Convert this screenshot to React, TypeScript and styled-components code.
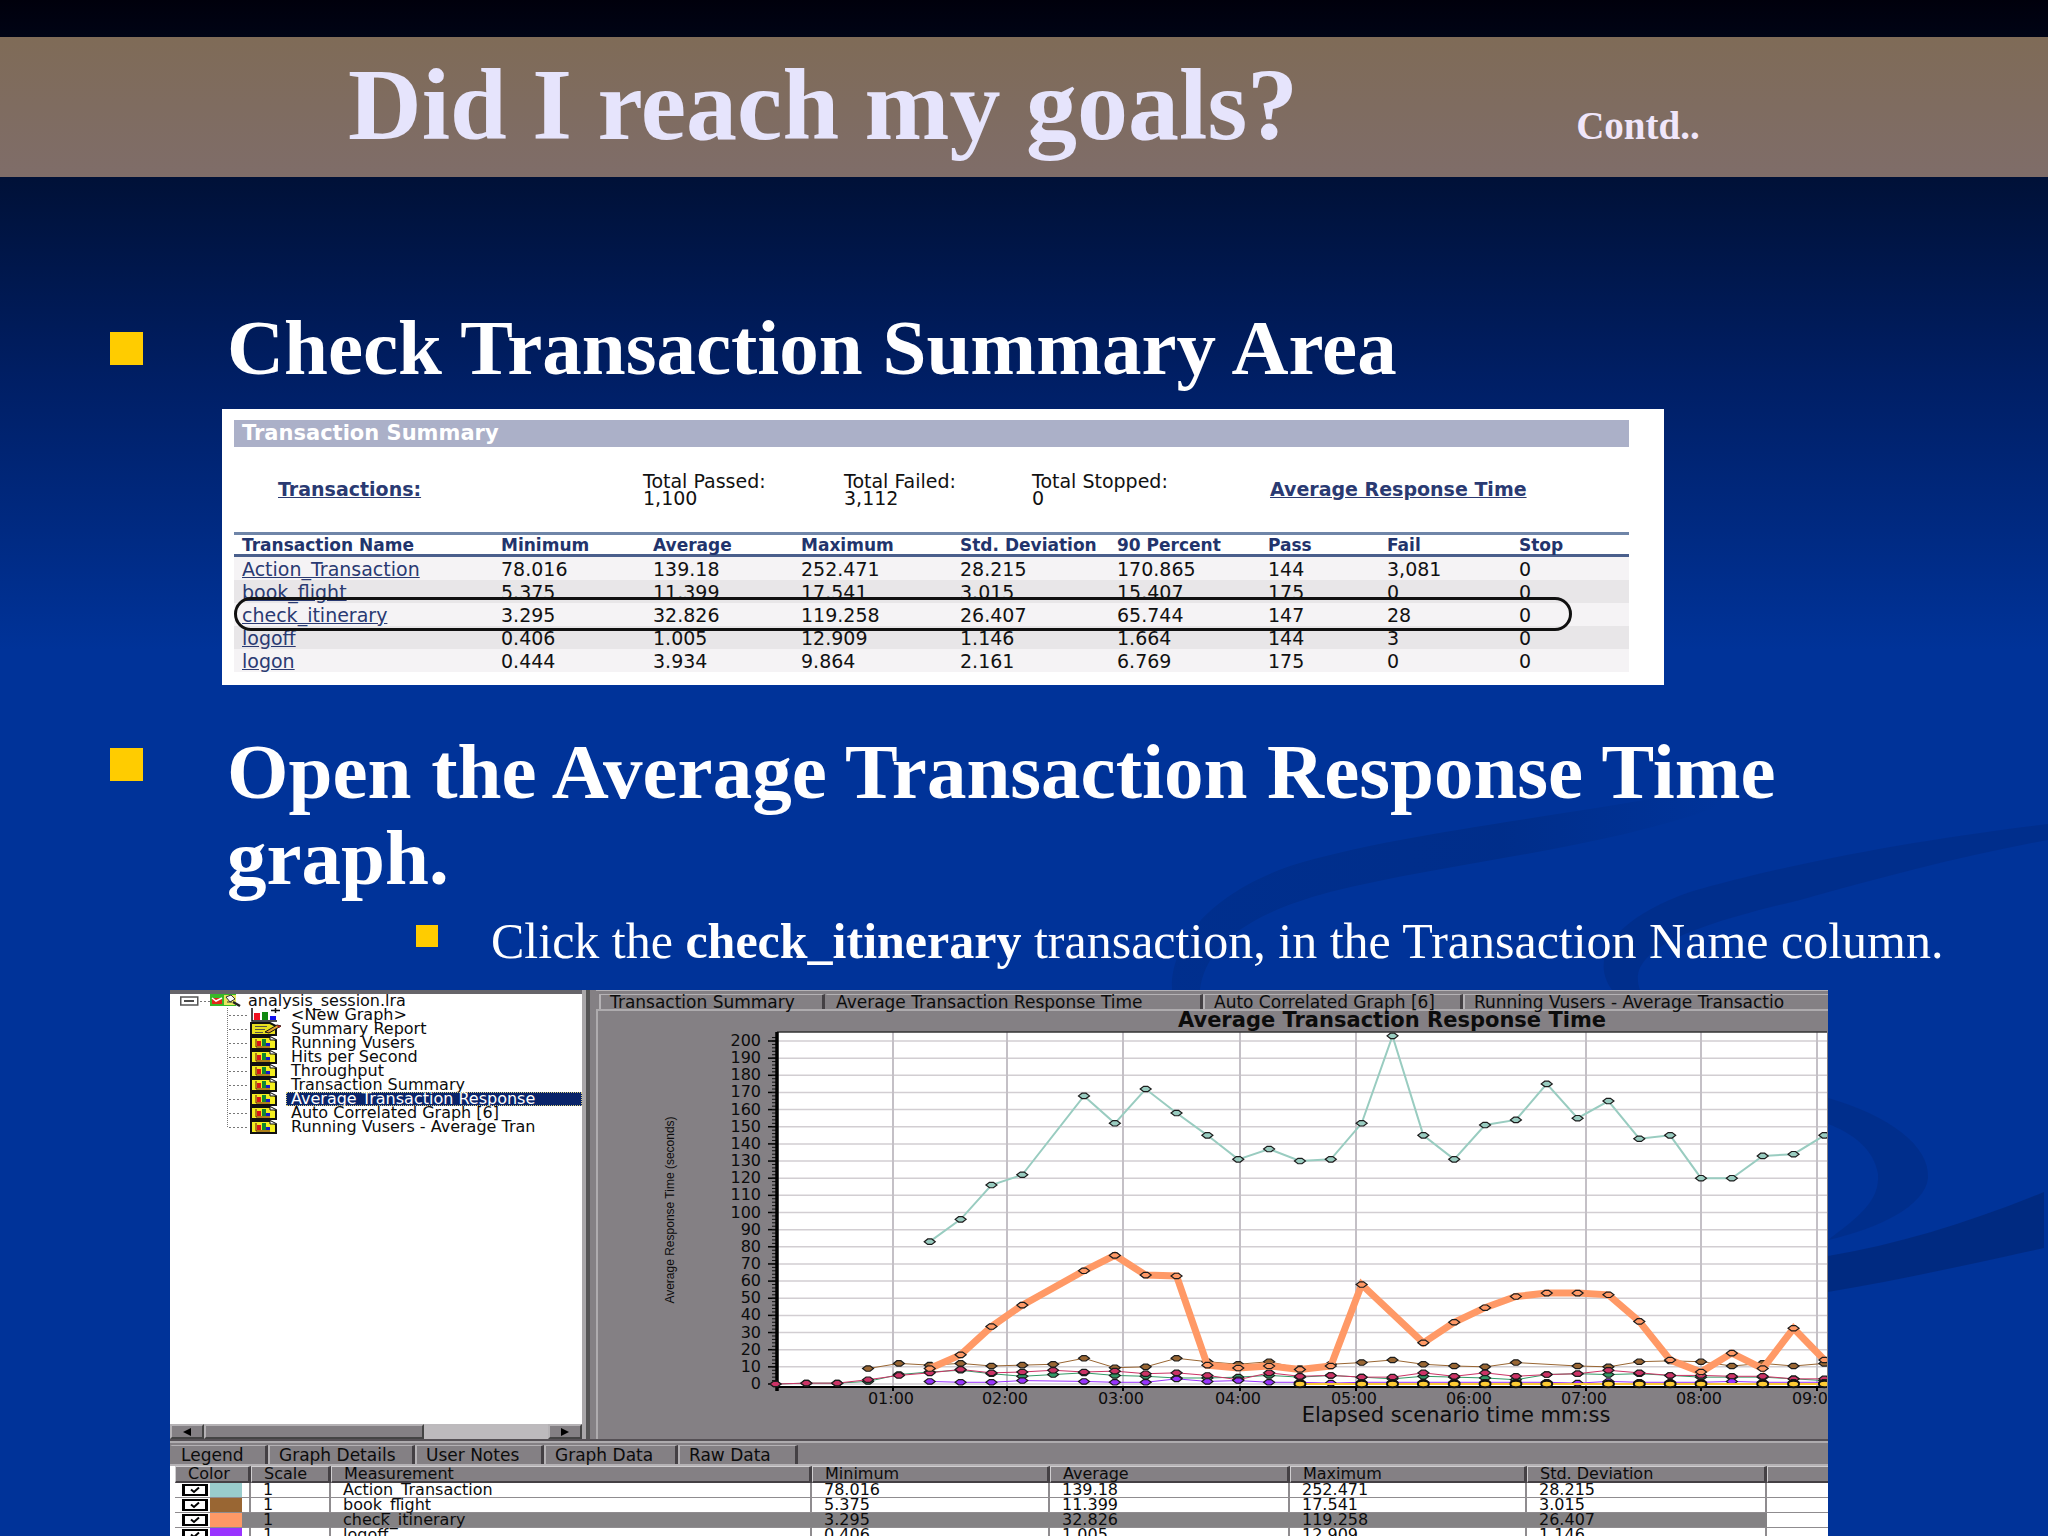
import React from "react";
import styled, { createGlobalStyle, css } from "styled-components";

const GlobalStyle = createGlobalStyle`
  * { box-sizing: border-box; }
  body { margin: 0; background: #003399; }
`;

const serif = `"Liberation Serif", "Times New Roman", serif`;
const wide = `"DejaVu Sans", Verdana, sans-serif`;

/* ---------- slide ---------- */

const Slide = styled.main`
  position: relative;
  isolation: isolate;
  display: flex;
  flex-direction: column;
  height: 100vh;
  overflow: hidden;
  padding-top: 37px;
  font-family: ${serif};
  color: #fff;
  background: linear-gradient(#00000c 0, #001138 180px, #001f66 384px, #003399 650px);
`;

const Backdrop = styled.svg`
  position: absolute;
  inset: 0;
  z-index: -1;
  width: 100%;
  height: 100%;
`;

const Band = styled.header`
  display: flex;
  align-items: baseline;
  gap: 278px;
  height: 140px;
  padding: 12px 0 0 348px;
  background: linear-gradient(#7f6b57, #7f6d69);
`;

const Title = styled.h1`
  margin: 0;
  font-size: 102px;
  line-height: 112px;
  color: #e6e4fc;
`;

const Contd = styled.span`
  font-size: 39px;
  font-weight: bold;
  color: #f0e6fa;
`;

const Section = styled.section<{ $top: number }>`
  display: grid;
  grid-template-columns: 117px 1fr;
  padding: 0 80px 0 110px;
  margin-top: ${(p) => p.$top}px;
`;

const Bullet = styled.span<{ $size: number; $top: number }>`
  width: ${(p) => p.$size}px;
  height: ${(p) => p.$size}px;
  margin-top: ${(p) => p.$top}px;
  background: #ffcc00;
`;

const Heading = styled.h2`
  margin: 0;
  font-size: 79px;
  line-height: 86px;
`;

const SubPoint = styled.div`
  display: grid;
  grid-template-columns: 75px 1fr;
  margin: 12px 0 0 416px;
`;

const SubText = styled.p`
  margin: 0;
  font-size: 50px;
  line-height: 56px;
  white-space: nowrap;
`;

/* ---------- transaction summary ---------- */

const Summary = styled.section`
  max-width: 1442px;
  margin: 18px 0 0 222px;
  padding: 11px 35px 13px 12px;
  background: #fff;
  color: #111;
  font-family: ${wide};
  font-size: 19px;
`;

const SummaryTitle = styled.h3`
  margin: 0;
  padding-left: 8px;
  font-size: 21px;
  line-height: 27px;
  color: #fff;
  background: #abb0c8;
`;

const Totals = styled.div`
  display: grid;
  grid-template-columns: 365px 201px 188px 238px 1fr;
  align-items: center;
  height: 85px;
  padding-left: 44px;
  line-height: 17px;
`;

const Link = styled.a<{ $bold?: boolean }>`
  color: #2a3a72;
  font-weight: ${(p) => (p.$bold ? "bold" : "normal")};
`;

const TableWrap = styled.div`
  position: relative;
`;

const SummaryTable = styled.table`
  width: 100%;
  table-layout: fixed;
  border-spacing: 0;
  th, td {
    padding: 0 0 0 8px;
    text-align: left;
    white-space: nowrap;
  }
  th {
    height: 25px;
    font-size: 17px;
    line-height: 18px;
    color: #22346c;
    border-top: 3px solid #6f85a8;
    border-bottom: 3px solid #4a5f8c;
  }
  td {
    height: 23px;
    line-height: 22px;
    background: #f5f3f5;
  }
  tbody tr:nth-child(even) td { background: #e8e6e8; }
`;

const Highlight = styled.div`
  position: absolute;
  top: 65px;
  left: 0;
  right: 57px;
  height: 34px;
  border: 3px solid #111;
  border-radius: 17px;
`;

/* ---------- analysis window ---------- */

const Analysis = styled.section`
  flex: 1;
  min-height: 0;
  display: flex;
  flex-direction: column;
  margin: 21px 220px 0 170px;
  overflow: hidden;
  background: #848084;
  color: #0c0c0c;
  font-family: ${wide};
  font-size: 16px;
`;

const Upper = styled.div`
  display: grid;
  grid-template-columns: 412px 1fr;
  column-gap: 14px;
  height: 451px;
  flex: none;
  border-bottom: 2px solid #555055;
`;

const TreePane = styled.div`
  display: flex;
  flex-direction: column;
  border-top: 4px solid #67656a;
  background: #fff;
  box-shadow: 4px 0 0 #a9a7a9, 8px 0 0 #555;
  overflow: hidden;
`;

const TreeClip = styled.div`
  flex: 1;
  overflow: hidden;
`;

const TreeRow = styled.div<{ $root?: boolean }>`
  display: flex;
  height: 14px;
  line-height: 14px;
  white-space: nowrap;
  padding-left: ${(p) => (p.$root ? 10 : 57)}px;
`;

const TreeLabel = styled.span<{ $selected?: boolean }>`
  flex: 1;
  padding-left: 5px;
  ${(p) =>
    p.$selected &&
    css`
      color: #fff;
      background: #0a246a;
      outline: 1px dotted #d8d080;
      outline-offset: -1px;
    `}
`;

const Scrollbar = styled.div`
  display: flex;
  height: 15px;
  background: #bdbabd;
`;

const raised = css`
  background: #848084;
  border: 2px solid;
  border-color: #b5b2b5 #444 #444 #b5b2b5;
`;

const ArrowButton = styled.button`
  ${raised}
  display: grid;
  place-items: center;
  width: 34px;
  padding: 0;
`;

const Thumb = styled.div`
  ${raised}
  width: 220px;
  margin-right: auto;
`;

const GraphPane = styled.div`
  min-width: 0;
  padding-top: 3px;
  border-top: 1px solid #b5b2b5;
  overflow: hidden;
`;

const Tabs = styled.div<{ $graph?: boolean }>`
  display: flex;
  height: ${(p) => (p.$graph ? 15 : 19)}px;
  padding-left: ${(p) => (p.$graph ? 3 : 0)}px;
  white-space: nowrap;
`;

const Tab = styled.button<{ $width: number; $active?: boolean }>`
  flex: none;
  width: ${(p) => p.$width}px;
  padding: 0 0 0 9px;
  border: 0 solid #444044;
  border-right-width: 3px;
  border-left: 2px solid #b5b2b5;
  border-top: 1px solid #b5b2b5;
  background: #848084;
  color: inherit;
  font: inherit;
  font-size: 17px;
  line-height: 13px;
  text-align: left;
  white-space: nowrap;
  ${(p) => p.$active && css`border-left-color: #848084;`}
`;

const ChartFrame = styled.div`
  border-top: 2px solid #aeabae;
  border-left: 2px solid #aeabae;
  overflow: hidden;
  svg { display: block; }
`;

const Lower = styled.div`
  padding-top: 2px;
  border-top: 2px solid #aeabae;
`;

const LegendWrap = styled.div`
  padding-left: 5px;
  border-top: 2px solid #b5b2b5;
  background: #fff;
`;

const LegendTable = styled.table`
  width: 100%;
  table-layout: fixed;
  border-spacing: 0;
  th, td {
    height: 15px;
    padding: 0 0 0 12px;
    font-weight: normal;
    line-height: 14px;
    text-align: left;
    white-space: nowrap;
  }
  th {
    height: 17px;
    background: #848084;
    border: 2px solid;
    border-width: 1px 3px 2px 1px;
    border-color: #d0ced0 #444044 #444044 #d0ced0;
    line-height: 14px;
  }
  td {
    border-right: 2px solid #8f8c8f;
    border-bottom: 1px solid #8f8c8f;
  }
  th:last-child, td:last-child { border-right: 0; }
`;

const LegendRow = styled.tr<{ $selected?: boolean }>`
  ${(p) =>
    p.$selected &&
    css`
      td:not(:last-child) {
        background: #848284;
        border-right-color: #848284;
      }
      td:first-child { background: linear-gradient(90deg, #fff 50px, #848284 50px); }
    `}
`;

const Mark = styled.label`
  position: relative;
  display: flex;
  gap: 2px;
  height: 14px;
  margin-left: -5px;
  svg {
    position: absolute;
    left: 6px;
    top: 3px;
    pointer-events: none;
  }
`;

const Check = styled.input`
  appearance: none;
  width: 26px;
  height: 12px;
  margin: 1px 0 0;
  border: 2px solid #000;
  border-width: 2px 3px;
  background: #fff;
`;

const Swatch = styled.span<{ $color: string }>`
  width: 32px;
  height: 14px;
  background: ${(p) => p.$color};
`;

/* ---------- data ---------- */

const summaryCols = [259, 152, 148, 159, 157, 151, 119, 132, 118];
const summaryHead = ["Transaction Name", "Minimum", "Average", "Maximum", "Std. Deviation", "90 Percent", "Pass", "Fail", "Stop"];
const summaryRows = [
  ["Action_Transaction", "78.016", "139.18", "252.471", "28.215", "170.865", "144", "3,081", "0"],
  ["book_flight", "5.375", "11.399", "17.541", "3.015", "15.407", "175", "0", "0"],
  ["check_itinerary", "3.295", "32.826", "119.258", "26.407", "65.744", "147", "28", "0"],
  ["logoff", "0.406", "1.005", "12.909", "1.146", "1.664", "144", "3", "0"],
  ["logon", "0.444", "3.934", "9.864", "2.161", "6.769", "175", "0", "0"],
];

const legendCols = [76, 80, 481, 238, 240, 237, 240];
const legendHead = ["Color", "Scale", "Measurement", "Minimum", "Average", "Maximum", "Std. Deviation"];
const legendRows = [
  { color: "#99cccc", cells: ["1", "Action_Transaction", "78.016", "139.18", "252.471", "28.215"] },
  { color: "#996633", cells: ["1", "book_flight", "5.375", "11.399", "17.541", "3.015"] },
  { color: "#ff9966", cells: ["1", "check_itinerary", "3.295", "32.826", "119.258", "26.407"], selected: true },
  { color: "#9933ff", cells: ["1", "logoff", "0.406", "1.005", "12.909", "1.146"] },
];

const treeItems = [
  { label: "<New Graph>", icon: "new" },
  { label: "Summary Report", icon: "report" },
  { label: "Running Vusers", icon: "graph" },
  { label: "Hits per Second", icon: "graph" },
  { label: "Throughput", icon: "graph" },
  { label: "Transaction Summary", icon: "graph" },
  { label: "Average Transaction Response", icon: "graph", selected: true },
  { label: "Auto Correlated Graph [6]", icon: "graph" },
  { label: "Running Vusers - Average Tran", icon: "graph", last: true },
];

type Sample = number | null;
const _ = null;
const action: Sample[] = [_, _, _, _, _, 83, 96, 116, 122, _, 168, 152, 172, 158, 145, 131, 137, 130, 131, 152, 203, 145, 131, 151, 154, 175, 155, 165, 143, 145, 120, 120, 133, 134, 145];
const check: Sample[] = [_, _, _, _, _, 9, 17, 33.5, 46, _, 66, 75, 63.5, 63, 11, 9.3, 10.5, 8.5, 10.5, 58, _, 24, 36, 44.5, 51, 53, 53, 52, 36.5, 14, 7, 18, 9, 32.5, 14];
const book: Sample[] = [_, _, _, 9, 12, 11, 12, 10.5, 11, 11.5, 15, 9.5, 10, 15, 13, 11.5, 13, 9, 11.5, 12.5, 14, 11.5, 10.5, 10, 12.5, _, 10.5, 10, 13, 13.5, 13, 10.5, 12, 10.5, 12];
const red: Sample[] = [0, 0.5, 0.5, 2.5, 5, 6.5, 8.5, 6.5, 7, 8, 7, 7.5, 6, 6.5, 5, 2.5, 6.5, 4.5, 5, 4, 4, 6.5, 4.5, 6.5, 4.5, 5.5, 6, 8, 6.5, 5, 5, 4.5, 4.5, 3, 3];
const green: Sample[] = [0, 0.5, 0.5, 1.5, 5.5, 7, 8, 6, 4.5, 5.5, 6.5, 5, 4.5, 3.5, 3.5, 4, 5, 4, 5, 4, 3, 4.5, 4, 3.5, 2.5, 5.5, 6, 5.5, 6, 5, 4, 4, 4, 3, 2];
const purple: Sample[] = [_, _, _, _, _, 1.5, 1, 1, 2, _, 1.5, 1, 1, 3, 1.5, 2, 1, 1, 0.5, 1, 1, 1, 1, 1, 1, 1, 0.5, 1.5, 1, 1, 1, 1.5, 1, 1, 1];
const yellow: Sample[] = [_, _, _, _, _, _, _, _, _, _, _, _, _, _, _, _, _, 0, _, 0, 0, 0, 0, 0, 0, 0, _, 0, 0, 0, 0, _, 0, 0, 0];

const series = [
  { data: action, color: "#99ccc0", width: 2 },
  { data: book, color: "#996633", width: 1 },
  { data: green, color: "#339966", width: 1 },
  { data: red, color: "#cc3366", width: 1 },
  { data: purple, color: "#9933ff", width: 1 },
  { data: yellow, color: "#ffcc33", width: 2, round: true },
  { data: check, color: "#ff9966", width: 7 },
];

/* ---------- drawings ---------- */

const px = (n: number) => 177.5 + 30.85 * n;
const py = (v: number) => 373 - 1.715 * v;
const minutes = [
  [294, "01:00"], [408, "02:00"], [524, "03:00"], [641, "04:00"], [757, "05:00"],
  [872, "06:00"], [987, "07:00"], [1102, "08:00"], [1218, "09:00"],
] as const;

function Chart() {
  return (
    <svg width="1229" height="429" fontFamily={wide} fontSize="16" fill="#0c0c0c" role="img" aria-label="Average Transaction Response Time">
      <rect x="179" y="21" width="1050" height="355" fill="#fff" />
      {Array.from({ length: 21 }, (_v, i) => (
        <g key={i}>
          <line x1="179" x2="1229" y1={py(i * 10)} y2={py(i * 10)} stroke="#d2ced2" strokeWidth="1.5" />
          <line x1="170" x2="179" y1={py(i * 10)} y2={py(i * 10)} stroke="#000" strokeWidth="1.5" />
          <text x="163" y={py(i * 10) + 5} textAnchor="end">{i * 10}</text>
        </g>
      ))}
      {Array.from({ length: 102 }, (_v, i) => (
        <line key={i} x1="174" x2="179" y1={py(i * 2)} y2={py(i * 2)} stroke="#111" />
      ))}
      {minutes.map(([x, label]) => (
        <g key={label}>
          {label !== "06:00" && <line x1={x + 1} x2={x + 1} y1="21" y2="379" stroke="#c4c0c6" strokeWidth="2" />}
          {label !== "06:00" && <line x1={x + 1} x2={x + 1} y1="375" y2="380" stroke="#000" strokeWidth="2" />}
          <text x={x - 1} y="393" textAnchor="middle">{label}</text>
        </g>
      ))}
      <line x1="179" x2="1229" y1="21" y2="21" stroke="#333" strokeWidth="1.5" />
      <line x1="179" x2="179" y1="21" y2="380" stroke="#000" strokeWidth="3.5" />
      <line x1="178" x2="1229" y1="376" y2="376" stroke="#000" strokeWidth="2" />
      {series.map((s) => {
        const pts = s.data.map((v, n) => (v === null ? null : [px(n), py(v)])).filter(Boolean) as number[][];
        return (
          <g key={s.color}>
            <polyline points={pts.map((p) => p.join(",")).join(" ")} fill="none" stroke={s.color} strokeWidth={s.width} />
            {pts.map(([x, y]) =>
              s.round ? (
                <ellipse key={x} cx={x} cy={y} rx="5.5" ry="3.2" fill={s.color} stroke="#111" strokeWidth="2" />
              ) : (
                <path key={x} d={`M${x - 5.5} ${y}L${x - 2} ${y - 2.7}H${x + 2}L${x + 5.5} ${y}L${x + 2} ${y + 2.7}H${x - 2}Z`} fill={s.color} stroke="#1c1c1c" strokeWidth="1.2" />
              )
            )}
          </g>
        );
      })}
      <text x="794" y="16" textAnchor="middle" fontSize="21" fontWeight="bold">Average Transaction Response Time</text>
      <text x="858" y="411" textAnchor="middle" fontSize="21">Elapsed scenario time mm:ss</text>
      <text transform="translate(76 199) rotate(-90)" textAnchor="middle" fontFamily='"Liberation Sans Narrow", "Liberation Sans", sans-serif' fontSize="12">
        Average Response Time (seconds)
      </text>
    </svg>
  );
}

function TreeIcon({ kind, last }: { kind: string; last?: boolean }) {
  return (
    <svg width="59" height="14" viewBox="0 0 59 14" style={{ flex: "none" }}>
      <path d={last ? "M.5 0V7" : "M.5 0V14"} stroke="#777" strokeDasharray="1 1" />
      <path d="M2 7.5H22" stroke="#777" strokeDasharray="2 2" />
      {kind === "new" && (
        <g>
          <path d="M25 0V13H50" fill="none" stroke="#111" strokeWidth="1.5" />
          <path d="M27 5h6v7h-6z" fill="#f01020" />
          <path d="M35 4h6v8h-6z" fill="#118811" />
          <path d="M43 8h6v4h-6z" fill="#1111ee" />
          <path d="M44 2.5h9M48.500 0V5" stroke="#111" strokeWidth="1.5" />
        </g>
      )}
      {kind === "report" && (
        <g>
          <path d="M24 1H43L49 4V13H24Z" fill="#e8e020" stroke="#111" strokeWidth="2" />
          <path d="M28 4.500H40M28 7.500H38M28 10.500H36" stroke="#554" strokeWidth="1.2" />
          <path d="M38 10L50 3L54 4L42 11Z" fill="#e0a030" stroke="#111" />
          <path d="M49 3L54 4L52 6Z" fill="#b02020" />
        </g>
      )}
      {kind === "graph" && (
        <g>
          <path d="M24 1H43L49 4V13H24Z" fill="#f4ee20" stroke="#111" strokeWidth="2" />
          <path d="M43 1V4H49" fill="#fff" stroke="#111" />
          <path d="M29 3V11H43" fill="none" stroke="#611" />
          <path d="M30 5h4v5h-4z" fill="#d81818" />
          <path d="M35 3h4v7h-4z" fill="#118830" />
          <path d="M39 7h4v3h-4z" fill="#1818c8" />
        </g>
      )}
    </svg>
  );
}

function RootIcon() {
  return (
    <svg width="63" height="14" viewBox="0 0 63 14" style={{ flex: "none" }}>
      <rect x=".75" y="3" width="17" height="8" fill="#fff" stroke="#555" strokeWidth="1.500" />
      <path d="M4 7H14" stroke="#111" strokeWidth="1.500" />
      <path d="M20 7.500H30" stroke="#777" strokeDasharray="2 2" />
      <path d="M30 0H56V12H30Z" fill="#38b828" />
      <path d="M32 4H42V10H32Z" fill="#e02818" />
      <path d="M32 4L36 7L42 4" fill="none" stroke="#fff" strokeWidth="1.500" />
      <path d="M44 1H56V11H44Z" fill="#e8e860" />
      <path d="M46 3L51 1L55 5L50 8ZM47 8H52" fill="#f8f8f8" stroke="#333" />
      <path d="M53 8L60 12" stroke="#222" strokeWidth="2.500" />
    </svg>
  );
}

function Swooshes() {
  return (
    <Backdrop viewBox="0 0 2048 1536" preserveAspectRatio="none" aria-hidden="true">
      <defs>
        <linearGradient id="fade" x1="0" x2="1" y1="0" y2="0">
          <stop offset="0" stopColor="#002a80" stopOpacity=".45" />
          <stop offset=".6" stopColor="#002a80" stopOpacity=".6" />
          <stop offset="1" stopColor="#002a80" stopOpacity="0" />
        </linearGradient>
      </defs>
      <path fill="url(#fade)" d="M1720 786C1560 818 1400 832 1290 866C1200 898 1170 950 1172 990H1200C1205 950 1240 916 1330 892C1450 862 1600 850 1720 806Z" />
      <path fill="#002a80" fillOpacity=".5" d="M2048 824C1900 842 1780 866 1690 892C1610 920 1590 960 1612 990H1640C1625 950 1690 926 1800 900C1880 878 1960 856 2048 840Z" />
      <path fill="#002a80" fillOpacity=".5" d="M1828 1098C1890 1116 1930 1146 1928 1178C1925 1206 1880 1228 1828 1240C1860 1216 1880 1200 1878 1174C1874 1148 1850 1132 1828 1124Z" />
      <path fill="#00297c" fillOpacity=".85" d="M2044 1192C1970 1222 1900 1244 1828 1256V1292C1900 1280 1980 1262 2044 1248Z" />
    </Backdrop>
  );
}

/* ---------- page ---------- */

export default function App() {
  return (
    <>
      <GlobalStyle />
      <Slide>
        <Swooshes />
        <Band>
          <Title>Did I reach my goals?</Title>
          <Contd>Contd..</Contd>
        </Band>

        <Section $top={128}>
          <Bullet $size={33} $top={27} />
          <Heading>Check Transaction Summary Area</Heading>
        </Section>

        <Summary>
          <SummaryTitle>Transaction Summary</SummaryTitle>
          <Totals>
            <div><Link $bold href="#transactions">Transactions:</Link></div>
            <div>Total Passed:<br />1,100</div>
            <div>Total Failed:<br />3,112</div>
            <div>Total Stopped:<br />0</div>
            <div><Link $bold href="#response">Average Response Time</Link></div>
          </Totals>
          <TableWrap>
            <SummaryTable>
              <colgroup>{summaryCols.map((w, i) => <col key={i} width={w} />)}</colgroup>
              <thead>
                <tr>{summaryHead.map((h) => <th key={h}>{h}</th>)}</tr>
              </thead>
              <tbody>
                {summaryRows.map(([name, ...cells]) => (
                  <tr key={name}>
                    <td><Link href={`#${name}`}>{name}</Link></td>
                    {cells.map((c, i) => <td key={i}>{c}</td>)}
                  </tr>
                ))}
              </tbody>
            </SummaryTable>
            <Highlight />
          </TableWrap>
        </Summary>

        <Section $top={44}>
          <Bullet $size={33} $top={19} />
          <Heading>Open the Average Transaction Response Time graph.</Heading>
        </Section>
        <SubPoint>
          <Bullet $size={22} $top={12} />
          <SubText>Click the <b>check_itinerary</b> transaction, in the Transaction Name column.</SubText>
        </SubPoint>

        <Analysis>
          <Upper>
            <TreePane>
              <TreeClip>
                <TreeRow $root>
                  <RootIcon />
                  <TreeLabel>analysis_session.lra</TreeLabel>
                </TreeRow>
                {treeItems.map((t) => (
                  <TreeRow key={t.label}>
                    <TreeIcon kind={t.icon} last={t.last} />
                    <TreeLabel $selected={t.selected}>{t.label}</TreeLabel>
                  </TreeRow>
                ))}
              </TreeClip>
              <Scrollbar>
                <ArrowButton aria-label="Scroll left">
                  <svg width="8" height="8"><path d="M8 0V8L0 4Z" /></svg>
                </ArrowButton>
                <Thumb />
                <ArrowButton aria-label="Scroll right">
                  <svg width="8" height="8"><path d="M0 0V8L8 4Z" /></svg>
                </ArrowButton>
              </Scrollbar>
            </TreePane>
            <GraphPane>
              <Tabs $graph>
                <Tab $width={226}>Transaction Summary</Tab>
                <Tab $width={378} $active>Average Transaction Response Time</Tab>
                <Tab $width={260}>Auto Correlated Graph [6]</Tab>
                <Tab $width={480}>Running Vusers - Average Transactio</Tab>
              </Tabs>
              <ChartFrame><Chart /></ChartFrame>
            </GraphPane>
          </Upper>
          <Lower>
            <Tabs>
              <Tab $width={98} $active>Legend</Tab>
              <Tab $width={147}>Graph Details</Tab>
              <Tab $width={129}>User Notes</Tab>
              <Tab $width={134}>Graph Data</Tab>
              <Tab $width={120}>Raw Data</Tab>
            </Tabs>
            <LegendWrap>
              <LegendTable>
                <colgroup>
                  {legendCols.map((w, i) => <col key={i} width={w} />)}
                  <col />
                </colgroup>
                <thead>
                  <tr>
                    {legendHead.map((h) => <th key={h}>{h}</th>)}
                    <th />
                  </tr>
                </thead>
                <tbody>
                  {legendRows.map((r) => (
                    <LegendRow key={r.color} $selected={r.selected}>
                      <td>
                        <Mark>
                          <Check type="checkbox" defaultChecked aria-label={r.cells[1]} />
                          <svg width="14" height="8"><path d="M3 3.500L6 6L11 1.500" fill="none" stroke="#000" strokeWidth="2" /></svg>
                          <Swatch $color={r.color} />
                        </Mark>
                      </td>
                      {r.cells.map((c, i) => <td key={i}>{c}</td>)}
                      <td />
                    </LegendRow>
                  ))}
                </tbody>
              </LegendTable>
            </LegendWrap>
          </Lower>
        </Analysis>
      </Slide>
    </>
  );
}
